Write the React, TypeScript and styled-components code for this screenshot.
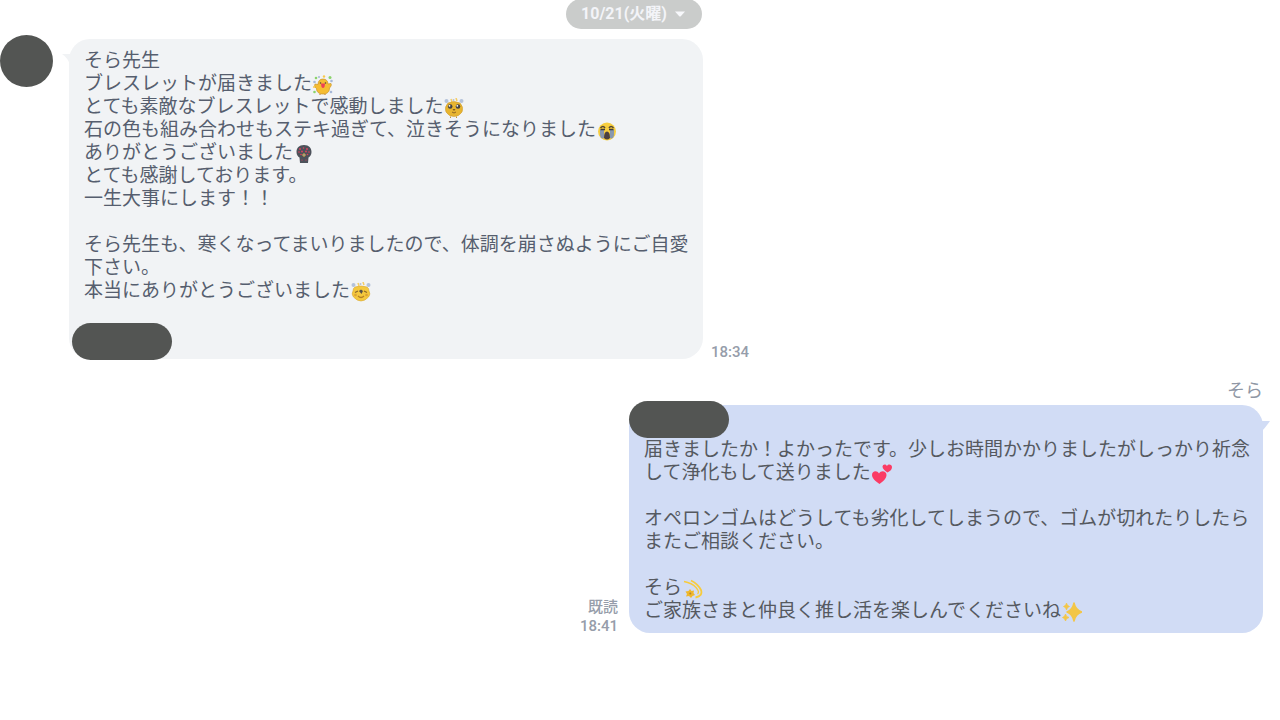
import React from "react";
import styled, { createGlobalStyle } from "styled-components";

const GlobalStyle = createGlobalStyle`
  body {
    margin: 0;
    background: #ffffff;
    font-family: Roboto, "Noto Sans CJK JP", sans-serif;
  }
`;

const Chat = styled.main`
  display: flex;
  flex-direction: column;
  padding-right: 12px;
`;

const DateButton = styled.button`
  align-self: center;
  display: flex;
  align-items: center;
  gap: 8px;
  height: 30px;
  margin-top: -1px;
  padding: 0 17px 1px 15px;
  border: 0;
  border-radius: 15px;
  background: #cacccb;
  color: #f3f4f8;
  font: 700 16px/20px Roboto, "Noto Sans CJK JP", sans-serif;
`;

const Incoming = styled.article`
  display: flex;
  align-items: flex-end;
  margin-top: 6px;
`;

const Avatar = styled.div`
  flex: none;
  align-self: flex-start;
  width: 53px;
  height: 52px;
  margin-right: 16px;
  border-radius: 50%;
  background: #535553;
`;

const Outgoing = styled.article`
  display: flex;
  flex-direction: column;
  align-items: flex-end;
  margin-top: 20px;
  padding-right: 5px;
`;

const Sender = styled.h2`
  margin: 0 0 6px;
  color: #8f97a5;
  font: 400 18px/20px "Noto Sans CJK JP", sans-serif;
`;

const OutgoingRow = styled.div`
  display: flex;
  justify-content: flex-end;
  align-items: flex-end;
  width: 100%;
`;

const Bubble = styled.div<{ $own?: boolean }>`
  position: relative;
  box-sizing: border-box;
  width: calc(50vw - 6px);
  margin-top: ${(p) => (p.$own ? 0 : 4)}px;
  padding: 10px 8px 11px 15px;
  border-radius: 21px;
  background: ${(p) => (p.$own ? "#d1dcf5" : "#f1f3f5")};
  color: ${(p) => (p.$own ? "#555960" : "#565e6e")};
`;

const Message = styled.p`
  margin: 0;
  font: 400 19px/23px Roboto, "Noto Sans CJK JP", sans-serif;
  white-space: pre-wrap;
`;

const Tail = styled.svg<{ $own?: boolean }>`
  position: absolute;
  top: 15px;
  ${(p) => (p.$own ? "right: -7px;" : "left: -7px;")}
  width: 14px;
  height: 11px;
`;

const Redaction = styled.span<{ $own?: boolean }>`
  position: absolute;
  ${(p) => (p.$own ? "top: -4px; left: 0;" : "bottom: -1px; left: 3px;")}
  width: 100px;
  height: 37px;
  border-radius: 19px;
  background: #535553;
`;

const Meta = styled.div<{ $own?: boolean }>`
  flex: none;
  display: flex;
  flex-direction: column;
  align-items: flex-end;
  gap: 5px;
  margin: ${(p) => (p.$own ? "0 11px 0 0" : "0 0 0 8px")};
  color: #969daa;
  font-size: 15px;
  font-weight: 500;
  line-height: 14px;
`;

const EmojiSvg = styled.svg`
  display: inline-block;
  width: 20px;
  height: 20px;
  margin: 0 0 -4px 1px;
  vertical-align: -1px;
`;

const Emoji = ({ label, children }: { label: string; children: React.ReactNode }) => (
  <EmojiSvg viewBox="0 0 20 20" role="img" aria-label={label}>
    {children}
  </EmojiSvg>
);

const Chick = () => (
  <Emoji label="chick">
    <path d="M10 4C13 4 15 6 15 9L18 8.500C19 10 17.500 12 16.500 13C16.500 17 14 19 10 19S3.500 17 3.500 13.500C2 12.500 1 11 2 9L5 9.500C5 6 7 4 10 4Z" fill="#f5bd32" stroke="#c99329" strokeWidth=".7" />
    <circle cx="7.500" cy="8" r=".8" fill="#4c463c" />
    <circle cx="12.500" cy="8" r=".8" fill="#4c463c" />
    <path d="M8 8.500H12L11.500 12Q10 14 8.500 12Z" fill="#ed4056" />
    <path d="M7 19V20M12 19V20" stroke="#b97927" />
    <g fill="#8bd36b"><circle cx="3" cy="3" r="1.300" /><circle cx="17" cy="2.500" r="1.500" /><circle cx="1.500" cy="17" r="1.300" /></g>
    <g fill="#a7b8d8"><circle cx="1.500" cy="7" r="1.300" /><circle cx="18.500" cy="6" r="1.300" /><circle cx="6" cy="2" r="1" /><circle cx="18" cy="17" r="1.300" /></g>
    <g fill="#f8ca4b"><circle cx="11" cy="1.500" r="1.200" /><circle cx="1" cy="12" r="1" /></g>
  </Emoji>
);

const Sparkles = () => (
  <g>
    <circle cx="2.500" cy="3" r="2" fill="#b4c2da" />
    <circle cx="17.500" cy="3" r="2" fill="#b4c2da" />
    <path d="M7 1L8 4M12 0L13 3" stroke="#f6cd63" strokeWidth="1.500" />
    <circle cx="9.500" cy="2" r="1" fill="#b8c2d0" />
  </g>
);

const Moved = () => (
  <Emoji label="moved">
    <Sparkles />
    <path d="M4 5Q10 2 16 5Q20 9 18 14Q15 18.500 10 18.500T2 14Q0 9 4 5Z" fill="#e8b52f" stroke="#cc9a2f" strokeWidth=".6" />
    <circle cx="6.200" cy="8.500" r="2.300" fill="#454344" />
    <circle cx="14" cy="8.500" r="2.300" fill="#454344" />
    <circle cx="5.500" cy="7.800" r=".9" fill="#fff" />
    <circle cx="13.300" cy="7.800" r=".9" fill="#fff" />
    <path d="M8.500 11H11.500L10 13Z" fill="#7e5924" />
    <path d="M8 14Q10 16 12 14" fill="none" stroke="#8f6522" />
    <path d="M6.500 18.500V20M12.500 18.500V20" stroke="#c39731" />
  </Emoji>
);

const Crying = () => (
  <Emoji label="crying">
    <circle cx="10" cy="10.500" r="9" fill="#f7ce3f" />
    <path d="M3.500 7Q6 4 8 7M12 7Q14 4 16.500 7" fill="none" stroke="#554733" strokeWidth="1.500" />
    <path d="M3 9H7V17Q4 19 3 14ZM13 9H17V14Q16 19 13 17Z" fill="#8998ae" />
    <path d="M3.500 8.500H8M12 8.500H16.500" stroke="#423c3b" strokeWidth="1.400" />
    <path d="M7 17Q7 10.500 10 10.500T13 17Q10 20 7 17Z" fill="#4c4140" />
  </Emoji>
);

const DarkHead = () => (
  <Emoji label="dark figure">
    <path d="M10 1C15 1 17.500 4 17.500 8C17.500 11 16 12.500 14.500 13.500L14 19H6L5.500 13.500C4 12.500 2.500 11 2.500 8C2.500 4 5 1 10 1Z" fill="#4d525b" />
    <g fill="#e63f5e">
      <circle cx="6" cy="5" r=".9" /><circle cx="9.500" cy="4" r=".8" /><circle cx="13" cy="5" r=".9" />
      <circle cx="5" cy="8" r=".8" /><circle cx="8" cy="7.500" r=".9" /><circle cx="12" cy="7.500" r=".9" />
      <circle cx="15" cy="8" r=".8" /><circle cx="7" cy="10.500" r=".8" /><circle cx="13.500" cy="10.500" r=".8" />
      <circle cx="8" cy="16" r=".6" /><circle cx="12" cy="16" r=".6" />
    </g>
    <path d="M8 11L10 9L12 11L10 13Z" fill="#e4ac42" />
    <path d="M9 11H11" stroke="#6d91b3" />
  </Emoji>
);

const Beaming = () => (
  <Emoji label="beaming">
    <Sparkles />
    <path d="M4 5Q10 3 16 5Q18 6 18 9Q20 12 17.500 15Q14 19 10 19T2.500 15Q0 12 2 9Q2 6 4 5Z" fill="#f4c83d" stroke="#d6a735" strokeWidth=".6" />
    <path d="M4 10.500L7 9M16 10.500L13 9" stroke="#8d6829" strokeWidth="1.300" />
    <path d="M8 9L10 7.500L12 9L10.500 12Z" fill="#565049" />
    <circle cx="4.500" cy="13" r="1.300" fill="#dca235" />
    <circle cx="15.500" cy="13" r="1.300" fill="#dca235" />
    <path d="M7 14Q10 17 13 14" fill="none" stroke="#b58026" strokeWidth="1.200" />
  </Emoji>
);

const Hearts = () => (
  <Emoji label="two hearts">
    <path d="M7.500 20C4 17.500 0 14.500 0 11C0 7 5 6 7 9.500C9 6 14.500 7 14.500 11C14.500 14.500 11 17.500 7.500 20Z" fill="#fb3b64" />
    <path d="M15.500 8.500C13 7 10.500 5 10.500 2.800C10.500 0 14 -.5 15 2C16.500 -.5 20 .5 20 3.200C20 5.500 17.500 7.500 15.500 8.500Z" fill="#fb3b64" />
  </Emoji>
);

const Dizzy = () => (
  <Emoji label="dizzy">
    <path d="M1 2.500Q9 4 13 8.500T14.500 15" fill="none" stroke="#f7cb3c" strokeWidth="1.300" />
    <path d="M8 1.500Q15 5 18 11Q20 17 12.500 18.500" fill="none" stroke="#f7cb3c" strokeWidth="1.800" />
    <path d="M7 10L8.500 12L11 11.500L10.500 14L12 16L9.500 17L8 19L6 17L3 17.500L4 15L2.500 12.500L5.500 12Z" fill="#efb72c" />
    <circle cx="7.300" cy="14.500" r="1" fill="#b28630" />
  </Emoji>
);

const Glitter = () => (
  <Emoji label="sparkles">
    <path d="M12 1Q13.500 8 20 10Q13.500 12 12 19Q10.500 12 5 10Q10.500 8 12 1Z" fill="#f3c647" stroke="#f3c647" strokeWidth="1.500" strokeLinejoin="round" />
    <path d="M4.500 1Q5 4 7.500 4.500Q5 5 4.500 8Q4 5 1.500 4.500Q4 4 4.500 1Z" fill="#f3c647" stroke="#f3c647" strokeWidth=".7" />
    <path d="M3.500 12Q4 15 7 15.500Q4 16 3.500 19Q3 16 .5 15.500Q3 15 3.500 12Z" fill="#f3c647" stroke="#f3c647" strokeWidth=".8" />
  </Emoji>
);

export default function App() {
  return (
    <>
      <GlobalStyle />
      <Chat>
        <DateButton type="button">
          10/21(火曜)
          <svg width="10" height="6" viewBox="0 0 10 6" aria-hidden="true">
            <path d="M0 .5H10L6 5Q5 6 4 5Z" fill="#f7f8fb" />
          </svg>
        </DateButton>

        <Incoming>
          <Avatar />
          <Bubble>
            <Tail viewBox="0 0 14 11" aria-hidden="true">
              <path d="M0 0H14V11H8Q6 4 0 0Z" fill="#f1f3f5" />
            </Tail>
            <Message>
              そら先生{"\n"}
              ブレスレットが届きました<Chick />{"\n"}
              とても素敵なブレスレットで感動しました<Moved />{"\n"}
              石の色も組み合わせもステキ過ぎて、泣きそうになりました<Crying />{"\n"}
              ありがとうございました<DarkHead />{"\n"}
              とても感謝しております。{"\n"}
              一生大事にします！！{"\n\n"}
              そら先生も、寒くなってまいりましたので、体調を崩さぬようにご自愛下さい。{"\n"}
              本当にありがとうございました<Beaming />{"\n\n\n"}
            </Message>
            <Redaction />
          </Bubble>
          <Meta>
            <time>18:34</time>
          </Meta>
        </Incoming>

        <Outgoing>
          <Sender>そら</Sender>
          <OutgoingRow>
            <Meta $own>
              <span>既読</span>
              <time>18:41</time>
            </Meta>
            <Bubble $own>
              <Tail $own viewBox="0 0 14 11" aria-hidden="true">
                <path d="M14 1H0V11H6Q9 8 14 1Z" fill="#d1dcf5" />
              </Tail>
              <Message>
                {"\n"}
                届きましたか！よかったです。少しお時間かかりましたがしっかり祈念して浄化もして送りました<Hearts />{"\n\n"}
                オペロンゴムはどうしても劣化してしまうので、ゴムが切れたりしたらまたご相談ください。{"\n\n"}
                そら<Dizzy />{"\n"}
                ご家族さまと仲良く推し活を楽しんでくださいね<Glitter />
              </Message>
              <Redaction $own />
            </Bubble>
          </OutgoingRow>
        </Outgoing>
      </Chat>
    </>
  );
}
